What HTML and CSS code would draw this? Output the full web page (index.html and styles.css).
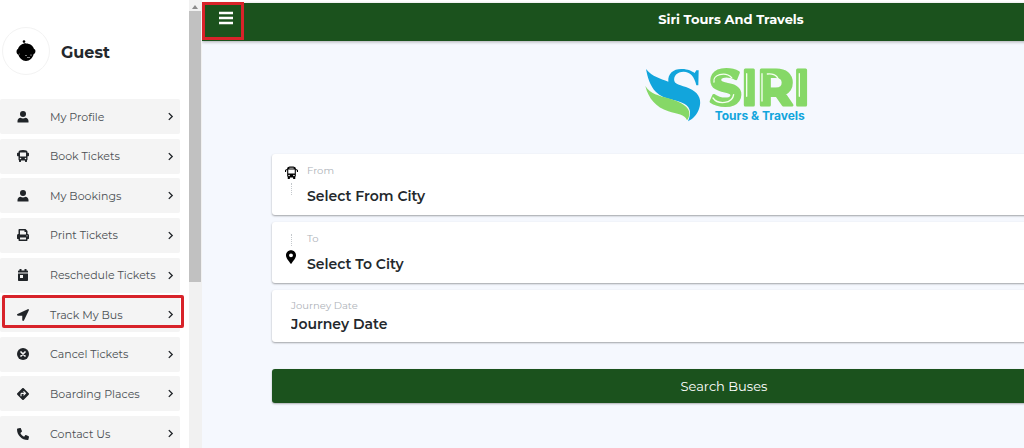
FILE: index.html
```html
<!DOCTYPE html>
<html lang="en">
<head>
    <meta charset="UTF-8">
    <meta name="viewport" content="width=device-width, initial-scale=1.0">
    <title>Siri Tours And Travels</title>
    <link rel="stylesheet" href="styles.css">
</head>
<body>
    <!-- Shared icon shapes -->
    <svg class="sprite" aria-hidden="true">
        <symbol id="user" viewBox="0 0 24 24"><circle cx="12" cy="6" r="6"/><path d="M1 23v-3c0-4 3-6.500 6-6.500 1.500 1 3 1.300 5 1.300s3.500-.3 5-1.300c3 0 6 2.500 6 6.500v3z"/></symbol>
        <symbol id="bus" viewBox="0 0 24 24"><path fill-rule="evenodd" d="M12 0C6 0 3 1.500 3 4v1.500H1.500C.6 5.500 0 6.200 0 7v4c0 1 .6 1.500 1.500 1.500H3V19c0 .8.300 1.300 1 1.700V23c0 .6.400 1 1 1h2c.6 0 1-.4 1-1v-2h8v2c0 .6.400 1 1 1h2c.6 0 1-.4 1-1v-2.300c.7-.4 1-.9 1-1.700v-6.500h1.500c.9 0 1.500-.5 1.500-1.500V7c0-.8-.6-1.500-1.500-1.500H21V4c0-2.500-3-4-9-4zM6 5h12v8H6zM7 15.500a1.500 1.500 0 1 1 0 3 1.500 1.500 0 0 1 0-3zm10 0a1.500 1.500 0 1 1 0 3 1.500 1.500 0 0 1 0-3z"/></symbol>
        <symbol id="coach" viewBox="0 0 24 24"><path fill-rule="evenodd" d="M12 1C7 1 4 2 4 4v2H2L0 8v3h2V8h2v10c0 1 .4 1.500 1 2v3c0 .6.400 1 1 1h2c.6 0 1-.4 1-1v-2h6v2c0 .6.400 1 1 1h2c.6 0 1-.4 1-1v-3c.6-.5 1-1 1-2V8h2v3h2V8l-2-2h-2V4c0-2-3-3-8-3zM8 3h8v1.500H8zM6 6.500h12V14H6zM7.500 16a1.500 1.500 0 1 1 0 3 1.500 1.500 0 0 1 0-3zm9 0a1.500 1.500 0 1 1 0 3 1.500 1.500 0 0 1 0-3z"/></symbol>
        <symbol id="print" viewBox="0 0 24 24"><path fill-rule="evenodd" d="M3 1.500C3 .6 3.600 0 4.500 0H17l4 4v6c2 0 3 1.200 3 3v6c0 .6-.4 1-1 1h-2v2.500c0 .9-.6 1.500-1.500 1.500h-15C3.600 24 3 23.400 3 22.500V20H1c-.6 0-1-.4-1-1v-6c0-1.800 1-3 3-3zM6 3v8h12V6h-3V3zm0 14v4h12v-4zm14-4.500a1.200 1.200 0 1 0 0 2.400 1.200 1.200 0 0 0 0-2.400z"/></symbol>
        <symbol id="calendar" viewBox="0 0 24 24"><path fill-rule="evenodd" d="M5 0h4v3h6V0h4v3h1.500c1 0 1.500.6 1.500 1.500V7H2V4.500C2 3.600 2.500 3 3.500 3H5zM2 9h20v13c0 1.200-.8 2-2 2H4c-1.200 0-2-.8-2-2zm4 3v6h6v-6z"/></symbol>
        <symbol id="arrow" viewBox="0 0 24 24"><path d="M21.500.3 1 10c-1.600.9-1.200 3.500.8 3.500h8.700v8.700c0 2 2.600 2.400 3.400.8L23.700 2.500C24.300 1 23-.3 21.500.3z"/></symbol>
        <symbol id="cancel" viewBox="0 0 24 24"><circle cx="12" cy="12" r="12"/><path d="m8 8 8 8m0-8-8 8" stroke="#f4f4f4" stroke-width="3.500" stroke-linecap="round"/></symbol>
        <symbol id="directions" viewBox="0 0 24 24"><path d="M10.600.6.600 10.600c-.8.8-.8 2 0 2.800l10 10c.8.8 2 .8 2.800 0l10-10c.8-.8.800-2 0-2.800l-10-10c-.8-.8-2-.8-2.800 0z"/><path d="M8 16.500v-4.200c0-1 .6-1.600 1.600-1.600H16m-3-4 4 4-4 4" fill="none" stroke="#f4f4f4" stroke-width="2.200"/></symbol>
        <symbol id="phone" viewBox="0 0 24 24"><path d="M1.200 1.200 6.200 0c.6-.1 1.100.2 1.400.7l2.300 5.400c.2.500.1 1-.4 1.400L6.700 9.800c1.700 3.400 4.100 5.800 7.500 7.500l2.300-2.800c.4-.5.900-.6 1.400-.4l5.400 2.300c.5.300.8.800.7 1.400l-1.200 5c-.1.700-.6 1.200-1.300 1.200C9.600 24 0 14.400 0 2.500c0-.7.500-1.200 1.200-1.300z"/></symbol>
        <symbol id="pin" viewBox="0 0 18 24"><path fill-rule="evenodd" d="M9 0C4 0 0 4 0 9c0 4 2 6.500 8 14.500.5.700 1.500.7 2 0C16 15.500 18 13 18 9c0-5-4-9-9-9zm0 5.500a3.500 3.500 0 1 1 0 7 3.500 3.500 0 0 1 0-7z"/></symbol>
        <symbol id="chevron" viewBox="0 0 12 16"><path d="m3 2 6 6-6 6" fill="none" stroke="currentColor" stroke-width="2.400"/></symbol>
    </svg>

    <div class="page">
        <aside class="sidebar">
            <div class="profile">
                <div class="avatar">
                    <svg viewBox="0 0 20 22" aria-hidden="true">
                        <circle cx="8" cy="1.500" r="1.300"/>
                        <path d="M8 2.500 9.500 4" fill="none" stroke="#000" stroke-width="1"/>
                        <path d="M10 3.500c4 0 7 2.200 8 5.500 2 0 2 4.500-.3 5-1 4-4 7-7.700 7s-6.700-3-7.700-6.500C0 14 0 9.500 2 9c1-3.500 4-5.500 8-5.500z"/>
                        <g fill="#fff"><circle cx="10" cy="15.500" r=".6"/><circle cx="15" cy="15" r=".6"/><circle cx="3.500" cy="14" r=".4"/><path d="M11 17.500h3v.5h-3z"/></g>
                    </svg>
                </div>
                <h2>Guest</h2>
            </div>
            <nav>
                <ul class="menu">
                    <li><a href="#"><svg class="icon"><use href="#user"/></svg><span>My Profile</span><svg class="chevron"><use href="#chevron"/></svg></a></li>
                    <li><a href="#"><svg class="icon"><use href="#bus"/></svg><span>Book Tickets</span><svg class="chevron"><use href="#chevron"/></svg></a></li>
                    <li><a href="#"><svg class="icon"><use href="#user"/></svg><span>My Bookings</span><svg class="chevron"><use href="#chevron"/></svg></a></li>
                    <li><a href="#"><svg class="icon"><use href="#print"/></svg><span>Print Tickets</span><svg class="chevron"><use href="#chevron"/></svg></a></li>
                    <li><a href="#"><svg class="icon"><use href="#calendar"/></svg><span>Reschedule Tickets</span><svg class="chevron"><use href="#chevron"/></svg></a></li>
                    <li class="marked"><a href="#"><svg class="icon"><use href="#arrow"/></svg><span>Track My Bus</span><svg class="chevron"><use href="#chevron"/></svg></a></li>
                    <li><a href="#"><svg class="icon"><use href="#cancel"/></svg><span>Cancel Tickets</span><svg class="chevron"><use href="#chevron"/></svg></a></li>
                    <li><a href="#"><svg class="icon"><use href="#directions"/></svg><span>Boarding Places</span><svg class="chevron"><use href="#chevron"/></svg></a></li>
                    <li><a href="#"><svg class="icon"><use href="#phone"/></svg><span>Contact Us</span><svg class="chevron"><use href="#chevron"/></svg></a></li>
                </ul>
            </nav>
        </aside>
        <div class="scrollbar" aria-hidden="true">
            <svg viewBox="0 0 12 8"><path d="m6 2 3 4H3z"/></svg>
            <div class="thumb"></div>
        </div>

        <div class="content">
            <div class="app">
                <header>
                    <button type="button" class="toggle" aria-label="Menu">
                        <svg viewBox="0 0 16 14"><path d="M1 2h14M1 7h14M1 12h14"/></svg>
                    </button>
                    <h1>Siri Tours And Travels</h1>
                </header>
                <main>
                    <svg class="logo" viewBox="-14 0 600 240" role="img" aria-label="Siri Tours &amp; Travels">
                        <path fill="#12a5dc" d="M52 42C72 66 94 70 119 80C117 55 135 41 160 42C178 42 190 49 198 54L203 46L210 46L209 91L203 91C198 65 184 50 165 50C145 50 134 63 137 78C140 91 166 91 190 104C212 116 220 137 211 162C204 181 193 191 178 199C188 175 187 159 168 147C145 133 107 136 82 111C64 93 57 68 52 42Z"/>
                        <path fill="#86d867" d="M50 93C65 117 91 122 119 130C158 141 184 156 182 178C181 187 178 192 175 196C169 178 145 177 119 169C82 157 59 130 50 93Z"/>
                        <text class="logo-name" x="243" y="149">SIRI</text>
                        <g class="shine">
                            <path d="M309 68C289 48 251 60 256 81"/>
                            <path d="M253 129C268 150 311 147 315 119"/>
                            <path d="M354 56V124"/>
                            <path d="M400 56V138M416 57C443 54 456 72 444 88"/>
                            <path d="M512 56V124"/>
                        </g>
                        <text class="logo-line" x="258" y="195">Tours &amp; Travels</text>
                    </svg>

                    <form>
                        <div class="field">
                            <div class="route">
                                <svg class="route-bus"><use href="#coach"/></svg>
                                <span class="dots"></span>
                            </div>
                            <div class="entry">
                                <label for="from">From</label>
                                <input id="from" type="text" placeholder="Select From City">
                            </div>
                        </div>
                        <div class="field">
                            <div class="route">
                                <span class="dots"></span>
                                <svg class="route-pin"><use href="#pin"/></svg>
                            </div>
                            <div class="entry">
                                <label for="to">To</label>
                                <input id="to" type="text" placeholder="Select To City">
                            </div>
                        </div>
                        <div class="field date">
                            <div class="entry">
                                <label for="date">Journey Date</label>
                                <input id="date" type="text" placeholder="Journey Date">
                            </div>
                        </div>
                        <button type="submit" class="search">Search Buses</button>
                    </form>
                </main>
            </div>
        </div>
    </div>
</body>
</html>
```
FILE: styles.css
```css
* {
    box-sizing: border-box;
}

body {
    margin: 0;
    font-family: 'Montserrat', 'Inter', sans-serif;
    color: #23282c;
    background: #fff;
}

.sprite {
    display: none;
}

.page {
    display: flex;
    height: 100vh;
    overflow: hidden;
}

/* Sidebar */
.sidebar {
    flex: none;
    width: 189px;
    padding: 27px 9px 0 0;
}

.profile {
    display: flex;
    align-items: center;
    gap: 11px;
    padding-left: 2px;
}

.avatar {
    display: flex;
    align-items: center;
    justify-content: center;
    width: 48px;
    height: 48px;
    border: 1px solid #f3f3f3;
    border-radius: 50%;
}

.avatar svg {
    width: 20px;
    height: 22px;
}

.profile h2 {
    margin: 0;
    padding-top: 4px;
    font-size: 16px;
    line-height: 24px;
    font-weight: 700;
}

.menu {
    display: flex;
    flex-direction: column;
    justify-content: space-between;
    height: 352px;
    margin: 24px 0 0;
    padding: 0;
    list-style: none;
}

.menu li {
    position: relative;
}

.menu a {
    display: flex;
    align-items: center;
    height: 35px;
    padding: 0 6px 0 17px;
    background: #f4f4f4;
    color: #4a4f53;
    font-size: 11px;
    text-decoration: none;
    border-radius: 2px;
}

.menu span {
    flex: 1;
    padding-left: 21px;
    white-space: nowrap;
}

.icon {
    flex: none;
    width: 12px;
    height: 12px;
    fill: #202428;
}

.chevron {
    flex: none;
    width: 7px;
    height: 9px;
    color: #202428;
}

.marked::after {
    content: "";
    position: absolute;
    inset: -2px -4px 4px 2px;
    border: 3px solid #d8232a;
    border-radius: 2px;
}

.scrollbar {
    display: flex;
    flex-direction: column;
    flex: none;
    width: 13px;
    padding: 3px 1px 0 0;
    background: #f1f1f1;
}

.scrollbar svg {
    height: 8px;
    fill: #8a8a8a;
}

.thumb {
    height: 61%;
    background: #c1c1c1;
}

/* Booking screen, wider than the visible area */
.content {
    flex: 1;
    min-width: 0;
    padding-top: 3px;
    overflow: hidden;
}

.app {
    width: 127%;
    height: 100%;
    background: #f5f8fe;
}

header {
    display: flex;
    align-items: center;
    height: 38px;
    background: #1b521d;
    color: #fff;
    box-shadow: 0 1px 3px rgba(0, 0, 0, 0.3);
}

.toggle {
    position: relative;
    width: 44px;
    height: 38px;
    padding: 0 0 6px 4px;
    border: 0;
    background: none;
}

.toggle::after {
    content: "";
    position: absolute;
    inset: -1px 2px 1px 0;
    border: 3px solid #d8232a;
}

.toggle svg {
    width: 16px;
    height: 14px;
    stroke: #fff;
    stroke-width: 2.4;
}

header h1 {
    flex: 1;
    margin: 0;
    padding: 0 30px 6px 0;
    font-size: 13px;
    font-weight: 700;
    text-align: center;
}

main {
    padding: 14px 70px 0;
}

.logo {
    display: block;
    width: 200px;
    height: 80px;
    margin: 0 auto;
}

.logo-name {
    font-family: 'Montserrat', 'Inter', sans-serif;
    font-size: 148px;
    font-weight: 700;
    fill: #86d867;
    stroke: #86d867;
    stroke-width: 9;
    stroke-linejoin: round;
}

.logo-line {
    font-family: 'Inter', sans-serif;
    font-size: 36px;
    font-weight: 700;
    fill: #12a5dc;
}

.shine path {
    fill: none;
    stroke: #f5fff0;
    stroke-width: 4;
    stroke-linecap: round;
}

form {
    margin-top: 19px;
}

.field {
    display: flex;
    margin-bottom: 7px;
    padding: 9px 12px;
    background: #fff;
    border-radius: 3px;
    box-shadow: 0 1px 2px rgba(0, 0, 0, 0.35);
}

.route {
    display: flex;
    flex-direction: column;
    align-items: center;
    gap: 4px;
    flex: none;
    width: 14px;
    padding-top: 3px;
}

.route-bus {
    width: 13px;
    height: 13px;
}

.route-pin {
    width: 10px;
    height: 14px;
}

.dots {
    height: 12px;
    border-left: 1px dotted #c4c8cc;
}

.entry {
    display: flex;
    flex-direction: column;
    gap: 7px;
    flex: 1;
    padding-left: 9px;
}

.entry label {
    color: #aeb3b9;
    font-size: 10px;
    line-height: 16px;
}

.entry input {
    width: 100%;
    height: 20px;
    padding: 0;
    border: 0;
    outline: none;
    background: none;
    font-family: inherit;
    font-size: 14px;
    font-weight: 600;
}

.entry input::placeholder {
    color: #23282c;
    opacity: 1;
}

.date {
    padding: 8px 12px;
}

.date .entry {
    gap: 0;
    padding-left: 7px;
}

.search {
    display: block;
    width: 100%;
    height: 34px;
    margin-top: 27px;
    border: 0;
    border-radius: 3px;
    background: #1b521d;
    color: #fff;
    font-family: inherit;
    font-size: 13px;
    box-shadow: 0 1px 2px rgba(0, 0, 0, 0.3);
}
```
